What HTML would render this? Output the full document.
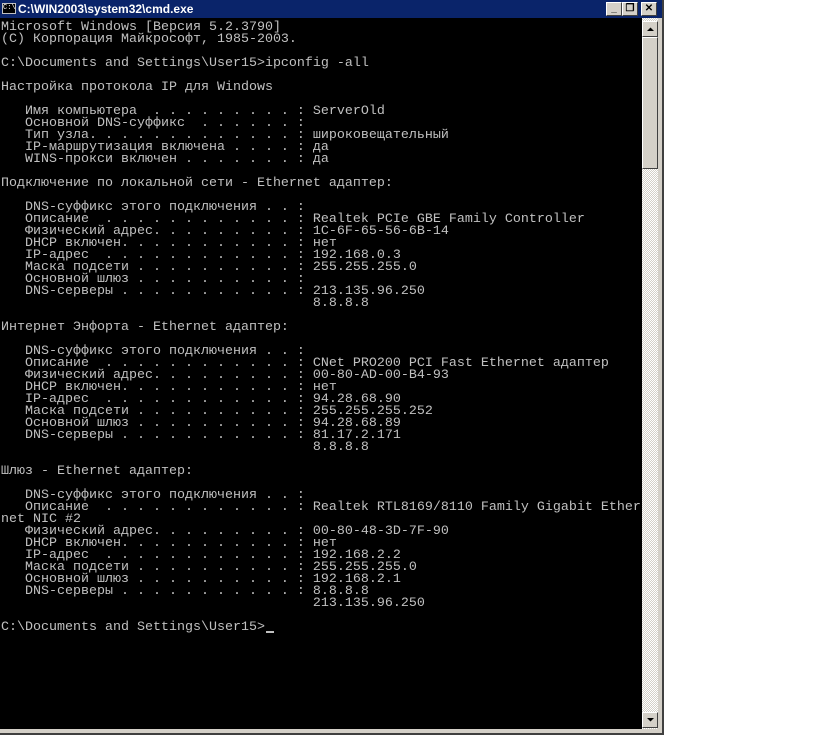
<!DOCTYPE html>
<html><head><meta charset="utf-8"><style>
*{margin:0;padding:0}
body{width:819px;height:735px;background:#fff;position:relative;overflow:hidden}
.win{position:absolute;left:0;top:0;width:664px;height:735px;background:#d4d0c8}
.title{position:absolute;left:0;top:0;width:662px;height:18px;background:#0a246a;color:#fff;font:bold 12px "Liberation Sans",sans-serif;line-height:18px}
.title span{position:absolute;left:18px;top:0}
.ico{position:absolute;left:2px;top:3px;width:14px;height:11px;background:#000;border:1px solid #c0c0c0;box-sizing:border-box;color:#fff;font:7px "Liberation Mono",monospace;line-height:9px;text-align:center}
.btn{position:absolute;top:2px;width:16px;height:14px;background:#d4d0c8;box-sizing:border-box;border:1px solid;border-color:#fff #404040 #404040 #fff;color:#000;font:bold 10px "Liberation Sans",sans-serif;text-align:center;line-height:12px}
.con{position:absolute;left:0;top:18px;width:642px;height:711px;background:#000;overflow:hidden}
pre{position:absolute;left:1px;top:4px;font-family:"Liberation Mono","DejaVu Sans Mono",monospace;font-size:13.33px;line-height:12px;color:#c0c0c0;white-space:pre}
.sb{position:absolute;left:642px;top:18px;width:16px;height:711px;background-color:#fff;background-image:repeating-conic-gradient(#d4d0c8 0 25%,#fff 0 50%);background-size:2px 2px}
.sbtn{position:absolute;left:0;width:16px;height:16px;background:#d4d0c8;box-sizing:border-box;border:1px solid;border-color:#fff #404040 #404040 #fff}
.rb{position:absolute;left:662px;top:0;width:2px;height:735px;background:#404040}
.bb{position:absolute;left:0;top:733px;width:664px;height:2px;background:#404040}
.cur{position:absolute;left:266px;top:631px;width:8px;height:2px;background:#c0c0c0}
</style></head><body>
<div class="win">
<div class="title"><div class="ico">C:\</div><span>C:\WIN2003\system32\cmd.exe</span>
<div class="btn" style="left:606px">_</div><div class="btn" style="left:622px">&#10064;</div><div class="btn" style="left:641px">✕</div></div>
<div class="con"><pre>Microsoft Windows [Версия 5.2.3790]
(C) Корпорация Майкрософт, 1985-2003.

C:\Documents and Settings\User15>ipconfig -all

Настройка протокола IP для Windows

   Имя компьютера  . . . . . . . . . : ServerOld
   Основной DNS-суффикс  . . . . . . :
   Тип узла. . . . . . . . . . . . . : широковещательный
   IP-маршрутизация включена . . . . : да
   WINS-прокси включен . . . . . . . : да

Подключение по локальной сети - Ethernet адаптер:

   DNS-суффикс этого подключения . . :
   Описание  . . . . . . . . . . . . : Realtek PCIe GBE Family Controller
   Физический адрес. . . . . . . . . : 1C-6F-65-56-6B-14
   DHCP включен. . . . . . . . . . . : нет
   IP-адрес  . . . . . . . . . . . . : 192.168.0.3
   Маска подсети . . . . . . . . . . : 255.255.255.0
   Основной шлюз . . . . . . . . . . :
   DNS-серверы . . . . . . . . . . . : 213.135.96.250
                                       8.8.8.8

Интернет Энфорта - Ethernet адаптер:

   DNS-суффикс этого подключения . . :
   Описание  . . . . . . . . . . . . : CNet PRO200 PCI Fast Ethernet адаптер
   Физический адрес. . . . . . . . . : 00-80-AD-00-B4-93
   DHCP включен. . . . . . . . . . . : нет
   IP-адрес  . . . . . . . . . . . . : 94.28.68.90
   Маска подсети . . . . . . . . . . : 255.255.255.252
   Основной шлюз . . . . . . . . . . : 94.28.68.89
   DNS-серверы . . . . . . . . . . . : 81.17.2.171
                                       8.8.8.8

Шлюз - Ethernet адаптер:

   DNS-суффикс этого подключения . . :
   Описание  . . . . . . . . . . . . : Realtek RTL8169/8110 Family Gigabit Ether
net NIC #2
   Физический адрес. . . . . . . . . : 00-80-48-3D-7F-90
   DHCP включен. . . . . . . . . . . : нет
   IP-адрес  . . . . . . . . . . . . : 192.168.2.2
   Маска подсети . . . . . . . . . . : 255.255.255.0
   Основной шлюз . . . . . . . . . . : 192.168.2.1
   DNS-серверы . . . . . . . . . . . : 8.8.8.8
                                       213.135.96.250

C:\Documents and Settings\User15></pre></div>
<div class="cur"></div>
<div class="sb">
<div class="sbtn" style="top:3px"><svg width="14" height="14" style="position:absolute;left:0;top:0"><path d="M4 9h7L7.5 5.5z" fill="#000"/></svg></div>
<div class="sbtn" style="top:19px;height:132px"></div>
<div class="sbtn" style="top:694px"><svg width="14" height="14" style="position:absolute;left:0;top:0"><path d="M4 5h7L7.5 8.5z" fill="#000"/></svg></div>
</div>
<div class="rb"></div><div class="bb"></div>
</div>
</body></html>
